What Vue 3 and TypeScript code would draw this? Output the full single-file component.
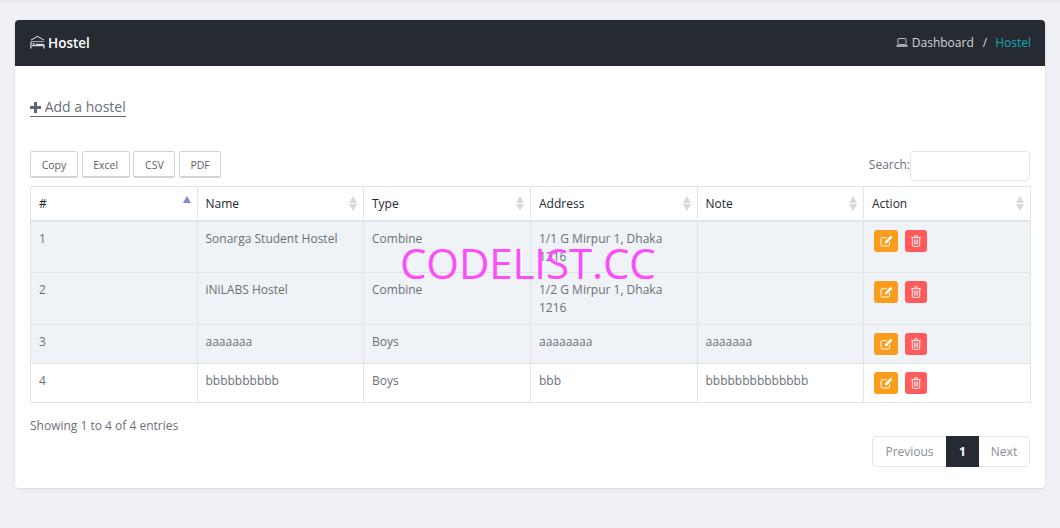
<template>
  <div class="page">
    <div class="top-line"></div>
    <div class="card">
      <div class="card-header">
        <div class="title">
          <svg class="hostel-icon" viewBox="0 0 16 14" width="15" height="14">
            <path d="M1 5 L8 1 L15 5" fill="none" stroke="#d8d8d8" stroke-width="1.1" />
            <path d="M1 6.5 H15" stroke="#d8d8d8" stroke-width="0.8" />
            <path d="M1 7 V14 M15 10 V14" stroke="#d8d8d8" stroke-width="1.4" />
            <path d="M2 11.5 H15 V10 Q15 8.8 13 8.8 H6 V10.2 H2 Z" fill="#d8d8d8" />
            <circle cx="3.8" cy="8.8" r="1.1" fill="#d8d8d8" />
          </svg>
          <span class="title-text">Hostel</span>
        </div>
        <div class="crumbs">
          <svg class="laptop-icon" viewBox="0 0 13 10" width="12" height="9">
            <rect x="2" y="0.6" width="9" height="6.6" rx="0.6" fill="none" stroke="#c8ccd0" />
            <path d="M0 8 H13 V8.6 Q13 9.6 12 9.6 H1 Q0 9.6 0 8.6 Z" fill="#c8ccd0" />
          </svg>
          <span class="crumb-link">Dashboard</span>
          <span class="crumb-sep">/</span>
          <span class="crumb-active">Hostel</span>
        </div>
      </div>

      <div class="card-body">
        <div class="add-row">
          <a class="add-link">
            <svg viewBox="0 0 11 11" width="11" height="11">
              <path d="M4 0 H7 V4 H11 V7 H7 V11 H4 V7 H0 V4 H4 Z" fill="#5f6670" />
            </svg>
            Add a hostel
          </a>
        </div>

        <div class="toolbar">
          <div class="export">
            <button v-for="b in exportButtons" :key="b.label" class="export-btn" :style="{ width: b.width + 'px' }">
              {{ b.label }}
            </button>
          </div>
          <label class="search">Search:<input type="text" /></label>
        </div>

        <table class="grid">
          <colgroup>
            <col v-for="(w, i) in colWidths" :key="i" :style="{ width: w + 'px' }" />
          </colgroup>
          <thead>
            <tr>
              <th v-for="(h, i) in headers" :key="h">
                {{ h }}
                <span class="sort">
                  <i class="up" :class="{ active: i === 0 }"></i>
                  <i class="down" :class="{ hidden: i === 0 }"></i>
                </span>
              </th>
            </tr>
          </thead>
          <tbody>
            <tr v-for="(r, i) in rows" :key="r.id" :class="{ striped: i < 3 }">
              <td>{{ r.id }}</td>
              <td>{{ r.name }}</td>
              <td>{{ r.type }}</td>
              <td>{{ r.address }}</td>
              <td>{{ r.note }}</td>
              <td>
                <div class="actions">
                  <span class="act edit">
                    <svg viewBox="0 0 13 12" width="13" height="12">
                      <path d="M9.5 6.8 V9.6 Q9.5 11 8 11 H2.4 Q1 11 1 9.6 V4 Q1 2.6 2.4 2.6 H6.6" fill="none" stroke="#fff" stroke-width="1" />
                      <path d="M10.6 0.8 L12.4 2.6 L7 8 L4.8 8.4 L5.2 6.2 Z" fill="#fff" />
                    </svg>
                  </span>
                  <span class="act del">
                    <svg viewBox="0 0 10 12" width="10" height="12">
                      <path d="M0.2 2.6 H9.8 M3.2 2.4 L3.8 0.8 H6.2 L6.8 2.4" fill="none" stroke="#fff" stroke-width="0.9" />
                      <path d="M1.3 2.8 V10 Q1.3 11.4 2.5 11.4 H7.5 Q8.7 11.4 8.7 10 V2.8" fill="none" stroke="#fff" stroke-width="0.9" />
                      <path d="M3.4 4.5 V9.6 M5 4.5 V9.6 M6.6 4.5 V9.6" stroke="#fff" stroke-width="0.8" />
                    </svg>
                  </span>
                </div>
              </td>
            </tr>
          </tbody>
        </table>

        <div class="info">Showing 1 to 4 of 4 entries</div>

        <div class="pager-row">
          <div class="pager">
            <span class="page-btn prev">Previous</span>
            <span class="page-btn current">1</span>
            <span class="page-btn next">Next</span>
          </div>
        </div>
      </div>
    </div>
    <div class="watermark">CODELIST.CC</div>
  </div>
</template>

<script setup lang="ts">
const exportButtons = [
  { label: "Copy", width: 48 },
  { label: "Excel", width: 48 },
  { label: "CSV", width: 42 },
  { label: "PDF", width: 42 },
];

const colWidths = [167, 166, 167, 167, 166, 167];
const headers = ["#", "Name", "Type", "Address", "Note", "Action"];

const rows = [
  { id: 1, name: "Sonarga Student Hostel", type: "Combine", address: "1/1 G Mirpur 1, Dhaka 1216", note: "" },
  { id: 2, name: "iNiLABS Hostel", type: "Combine", address: "1/2 G Mirpur 1, Dhaka 1216", note: "" },
  { id: 3, name: "aaaaaaa", type: "Boys", address: "aaaaaaaa", note: "aaaaaaa" },
  { id: 4, name: "bbbbbbbbbb", type: "Boys", address: "bbb", note: "bbbbbbbbbbbbbb" },
];
</script>

<style>
html,
body {
  margin: 0;
  background: #eff1f7;
}
</style>

<style scoped>
.page {
  position: relative;
  height: 528px;
  overflow: hidden;
  background: #eff1f7;
  font-family: "Open Sans", "Noto Sans", sans-serif;
  font-size: 12px;
  color: #6b7078;
  box-sizing: border-box;
}
.top-line {
  height: 2px;
  background: #e6e8ee;
  margin-bottom: 18px;
}
.card {
  margin: 0 15px;
  height: 468px;
  background: #fff;
  border-radius: 4px;
  box-shadow: 0 1px 3px rgba(0, 0, 0, 0.1);
  overflow: hidden;
}
.card-header {
  height: 46px;
  background: #262a33;
  display: flex;
  align-items: center;
  justify-content: space-between;
  padding: 0 14px 2px 15px;
  box-sizing: border-box;
}
.title {
  display: flex;
  align-items: center;
  gap: 3px;
  color: #fff;
  font-size: 13.5px;
  font-weight: 600;
}
.title-text {
  padding-top: 2px;
}
.crumbs {
  display: flex;
  align-items: center;
  color: #d2d5d8;
  font-size: 12px;
}
.laptop-icon {
  margin-right: 4px;
}
.crumb-sep {
  margin: 0 8px 0 9px;
}
.crumb-active {
  color: #14aab2;
}
.card-body {
  padding: 0 15px;
}
.add-row {
  padding-top: 31px;
  height: 55px;
  box-sizing: border-box;
}
.add-link {
  display: inline-block;
  font-size: 14px;
  line-height: 20px;
  height: 19px;
  color: #6b7078;
  border-bottom: 1px solid #5f6670;
}
.add-link svg {
  vertical-align: -1px;
}
.toolbar {
  display: flex;
  justify-content: space-between;
  align-items: flex-start;
  height: 35px;
  margin-top: 30px;
}
.export {
  display: flex;
  gap: 3.7px;
}
.export-btn {
  height: 27px;
  padding: 1px 0 0;
  background: #fff;
  border: 1px solid #d2d4d7;
  border-bottom-width: 2px;
  border-radius: 2px;
  font-family: inherit;
  font-size: 10.5px;
  color: #5c6066;
}
.search {
  display: flex;
  align-items: flex-start;
  font-size: 12px;
  line-height: 28px;
}
.search input {
  width: 118px;
  height: 28px;
  padding: 0;
  background: #fff;
  border: 1px solid #e2e6ea;
  border-radius: 4px;
  box-sizing: content-box;
}
.grid {
  width: 1000px;
  table-layout: fixed;
  border-collapse: collapse;
  font-size: 12px;
  line-height: 18px;
}
.grid th,
.grid td {
  border: 1px solid #dfe4e9;
  text-align: left;
  vertical-align: top;
}
.grid th {
  position: relative;
  height: 33px;
  padding: 0 8px;
  vertical-align: middle;
  border-bottom-width: 2px;
  font-weight: 400;
  color: #23272e;
}
.grid td {
  padding: 7.5px 8px 6.9px;
}
.grid tbody tr:nth-child(n + 3) td {
  padding-top: 8.2px;
  padding-bottom: 6.9px;
}
.grid td:nth-child(2),
.grid th:nth-child(2),
.grid td:nth-child(5),
.grid th:nth-child(5) {
  padding-left: 7.5px;
}
.striped td {
  background: #eff2f6;
}
.sort {
  position: absolute;
  right: 6px;
  top: 9px;
  display: flex;
  flex-direction: column;
  gap: 1px;
}
.sort i {
  display: block;
  width: 0;
  height: 0;
  border-left: 4.5px solid transparent;
  border-right: 4.5px solid transparent;
}
.sort .up {
  border-bottom: 7px solid #d8d9da;
}
.sort .up.active {
  border-bottom-color: #8585df;
}
.sort .down {
  border-top: 7px solid #d8d9da;
}
.sort .down.hidden {
  visibility: hidden;
}
.actions {
  display: flex;
  gap: 7px;
  margin: 0.5px 0 1.1px 2px;
}
.grid tbody tr:nth-child(n + 3) .actions {
  margin-top: -0.2px;
}
.act {
  height: 22px;
  border-radius: 3px;
  display: flex;
  align-items: center;
  justify-content: center;
}
.edit {
  width: 24px;
  background: #fb9d1c;
}
.del {
  width: 22px;
  background: #ff5b5b;
}
.info {
  margin-top: 14px;
  line-height: 18px;
}
.pager-row {
  display: flex;
  justify-content: flex-end;
  margin-top: 1px;
}
.pager {
  display: flex;
  height: 31px;
  box-sizing: border-box;
  border: 1px solid #e2e6ea;
  border-radius: 4px;
}
.page-btn {
  display: flex;
  align-items: center;
  justify-content: center;
  color: #8a8d92;
}
.prev {
  width: 73px;
}
.current {
  width: 33px;
  margin: -1px 0;
  background: #262a33;
  color: #fff;
  font-weight: 700;
}
.next {
  width: 50px;
}
.watermark {
  position: absolute;
  left: 400px;
  top: 234px;
  font-size: 42px;
  line-height: 58px;
  letter-spacing: -0.1px;
  color: #fb4dfb;
  white-space: nowrap;
}
</style>
